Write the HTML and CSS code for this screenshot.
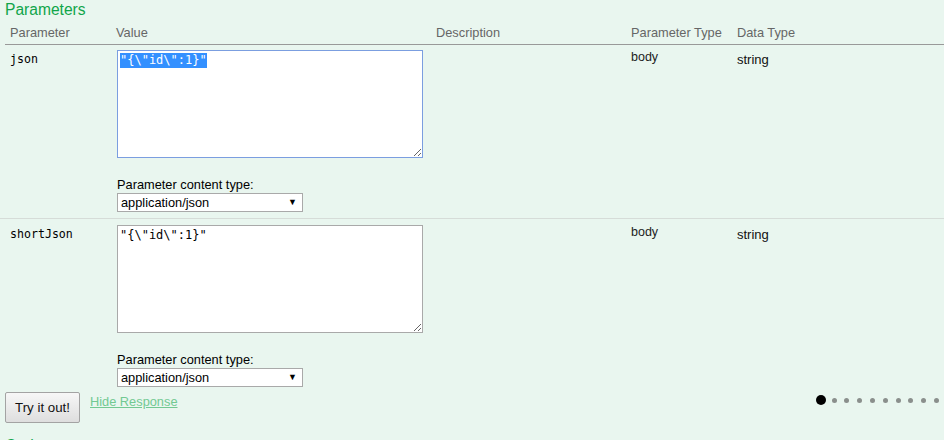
FILE: index.html
```html
<!DOCTYPE html>
<html lang="en">
<head>
<meta charset="utf-8">
<title>Parameters</title>
<link rel="stylesheet" href="styles.css">
</head>
<body>
<div class="content">
  <h4 class="heading">Parameters</h4>
  <table class="params">
    <colgroup>
      <col class="c-name"><col class="c-value"><col class="c-desc"><col class="c-ptype"><col class="c-dtype">
    </colgroup>
    <thead>
      <tr><th class="first">Parameter</th><th>Value</th><th>Description</th><th>Parameter Type</th><th>Data Type</th></tr>
    </thead>
    <tbody>
      <tr>
        <td class="code">json</td>
        <td>
          <textarea class="body-textarea focused" id="json-value">"{\"id\":1}"</textarea>
          <div class="ctype">
            <div class="ctype-label">Parameter content type:</div>
            <span class="select-wrap"><select class="ctype-select"><option>application/json</option></select></span>
          </div>
        </td>
        <td></td>
        <td class="ptype">body</td>
        <td><span class="model">string</span></td>
      </tr>
      <tr>
        <td class="code">shortJson</td>
        <td>
          <textarea class="body-textarea">"{\"id\":1}"</textarea>
          <div class="ctype">
            <div class="ctype-label">Parameter content type:</div>
            <span class="select-wrap"><select class="ctype-select"><option>application/json</option></select></span>
          </div>
        </td>
        <td></td>
        <td class="ptype">body</td>
        <td><span class="model">string</span></td>
      </tr>
    </tbody>
  </table>
  <div class="submit-row">
    <button class="submit" type="button">Try it out!</button>
    <a class="response-hider" href="#">Hide Response</a>
    <div class="dots">
      <span class="dot big"></span><span class="dot"></span><span class="dot"></span><span class="dot"></span><span class="dot"></span><span class="dot"></span><span class="dot"></span><span class="dot"></span><span class="dot"></span><span class="dot"></span>
    </div>
  </div>
  <h4 class="heading curl">Curl</h4>
</div>
<script src="script.js"></script>
</body>
</html>
```

FILE: styles.css
```css
html, body {
  margin: 0;
  padding: 0;
  background: #e9f6ef;
  overflow: hidden;
}
body {
  width: 944px;
  height: 440px;
  font-family: "Liberation Sans", Arial, sans-serif;
  color: #000;
}
.content {
  padding: 1px 0 0 0;
}
.heading {
  margin: 0;
  padding-left: 5px;
  font-size: 15.6px;
  line-height: 18px;
  font-weight: normal;
  color: #10a54a;
}
.params {
  border-collapse: collapse;
  width: 944px;
  table-layout: fixed;
}
.c-name { width: 111px; }
.c-value { width: 320px; }
.c-desc { width: 195px; }
.c-ptype { width: 106px; }
.c-dtype { width: 212px; }
.params th {
  text-align: left;
  font-weight: normal;
  font-size: 12.8px;
  line-height: 15px;
  color: #666;
  padding: 6px 0 4px 5px;
  border-bottom: 1px solid #999;
}
.params th.first {
  padding-left: 10px;
  border-bottom: none;
  background: linear-gradient(#999, #999) no-repeat right bottom / calc(100% - 5px) 1px;
}
.params td {
  vertical-align: top;
  padding: 5px 0 6px 5px;
  font-size: 12.5px;
  line-height: 15px;
  color: #222;
}
.params tbody tr + tr td {
  border-top: 1px solid #d6dcd8;
  padding-top: 6px;
  padding-bottom: 5px;
}
.params td.code {
  padding-left: 10px;
  padding-top: 7px;
  font-family: "DejaVu Sans Mono", "Liberation Mono", monospace;
  font-size: 11.6px;
  color: #000;
}
.params tbody tr + tr td.code {
  padding-top: 8px;
}
.body-textarea {
  display: block;
  box-sizing: border-box;
  width: 306px;
  height: 108px;
  margin: 0 0 0 1px;
  padding: 2px 2px;
  border: 1px solid #a9a9a9;
  background: #fff;
  font-family: "DejaVu Sans Mono", "Liberation Mono", monospace;
  font-size: 12px;
  line-height: 15px;
  color: #000;
  resize: both;
}
.body-textarea.focused {
  border-color: #7b9ee0;
}
.body-textarea:focus {
  outline: none;
}
.body-textarea::selection {
  background: #3390ff;
  color: #fff;
}
.ctype {
  margin-top: 19px;
  margin-left: 1px;
}
.ctype-label {
  font-size: 12.8px;
  line-height: 15px;
  color: #000;
  height: 16px;
}
.select-wrap {
  position: relative;
  display: inline-block;
  vertical-align: top;
}
.select-wrap::after {
  content: "\25BC";
  position: absolute;
  right: 6px;
  top: 4px;
  font-size: 9px;
  line-height: 10px;
  color: #000;
  pointer-events: none;
}
.ctype-select {
  -webkit-appearance: none;
  appearance: none;
  display: block;
  box-sizing: border-box;
  width: 186px;
  height: 19px;
  margin: 0;
  padding: 0 0 0 3px;
  border: 1px solid #a9a9a9;
  border-radius: 0;
  background: #fff;
  font-family: "Liberation Sans", Arial, sans-serif;
  font-size: 12.8px;
  line-height: 17px;
  color: #000;
}
.ptype {
  font-size: 12.5px;
}
.model {
  display: block;
  margin-top: 2px;
  font-size: 13px;
  color: #111;
}
.submit-row {
  display: flex;
  align-items: flex-start;
  padding: 0 0 0 5px;
}
.submit {
  box-sizing: border-box;
  width: 75px;
  height: 31px;
  margin: 0;
  padding: 0;
  border: 1px solid #a3a3a3;
  border-radius: 2px;
  background: linear-gradient(#f7f7f7, #dedede);
  font-family: "Liberation Sans", Arial, sans-serif;
  font-size: 13.3px;
  color: #111;
}
.response-hider {
  margin: 2px 0 0 10px;
  font-size: 12.8px;
  line-height: 15px;
  color: #72c992;
  text-decoration: underline;
}
.dots {
  margin: 3px 5px 0 auto;
  display: flex;
  align-items: center;
  gap: 7.8px;
}
.dot {
  display: block;
  width: 5px;
  height: 5px;
  border-radius: 50%;
  background: #8a8f8c;
}
.dot.big {
  width: 10px;
  height: 10px;
  background: #000;
  margin-right: -2.3px;
}
.curl {
  margin-top: 14px;
}
```

FILE: script.js
```js
var ta = document.getElementById('json-value');
ta.focus();
ta.setSelectionRange(0, ta.value.length);
```
